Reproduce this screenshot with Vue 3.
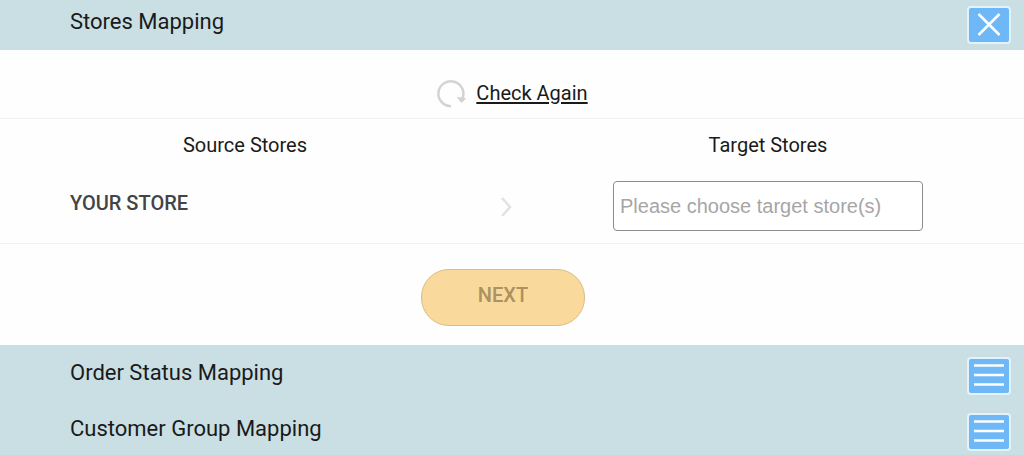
<template>
  <div class="mapping">
    <section>
      <div class="bar bar-open">
        <h2 class="bar-title">Stores Mapping</h2>
        <button class="toggle" type="button" aria-label="Close" @click="open = !open">
          <svg v-if="open" width="40" height="34" viewBox="0 0 40 34">
            <path d="M9.500 6L30.500 27M30.500 6L9.500 27" />
          </svg>
          <svg v-else width="40" height="34" viewBox="0 0 40 34">
            <path d="M5 6.500H35M5 16H35M5 25.500H35" />
          </svg>
        </button>
      </div>

      <div v-if="open">
        <div class="check">
          <svg class="reload" width="32" height="30" viewBox="0 0 32 30">
            <path d="M15 28.200A12.500 12.500 0 1 1 26.200 21" />
            <path class="reload-head" d="M21.500 19.500L29.500 20.500L25.500 24.500Z" />
          </svg>
          <a href="#" @click.prevent="check">Check Again</a>
        </div>

        <div class="stores">
          <div class="heading">Source Stores</div>
          <label class="heading heading-target" for="target">Target Stores</label>
          <div class="source">YOUR STORE</div>
          <svg class="arrow" width="12" height="20" viewBox="0 0 12 20">
            <path d="M2 2L10 11L2 20" />
          </svg>
          <input id="target" v-model="target" class="target" type="text" placeholder="Please choose target store(s)">
        </div>

        <div class="actions">
          <button class="next" type="button" :disabled="!target">NEXT</button>
        </div>
      </div>
    </section>

    <section v-for="item in sections" :key="item" class="bar">
      <h2 class="bar-title">{{ item }}</h2>
      <button class="toggle" type="button" :aria-label="item">
        <svg width="40" height="34" viewBox="0 0 40 34">
          <path d="M5 6.500H35M5 16H35M5 25.500H35" />
        </svg>
      </button>
    </section>
  </div>
</template>

<script setup>
import { ref } from 'vue'

const open = ref(true)
const target = ref('')
const sections = ['Order Status Mapping', 'Customer Group Mapping']

// start over with an empty choice
const check = () => {
  target.value = ''
}
</script>

<style>
body {
  margin: 0;
  background: #fefefe;
}
</style>

<style scoped>
.mapping {
  font-family: Roboto, "Liberation Sans", sans-serif;
  font-size: 20px;
  line-height: 24px;
  color: #1a1a1a;
}
.bar {
  display: flex;
  justify-content: space-between;
  align-items: flex-start;
  box-sizing: border-box;
  height: 56px;
  padding: 12px 13px 0 70px;
  background: #c9dfe4;
}
.bar-open {
  height: 50px;
  padding-top: 6px;
}
.bar-title {
  margin: 4px 0 0;
  font-size: 22px;
  font-weight: 400;
  line-height: 24px;
}
.toggle {
  display: flex;
  padding: 0;
  border: 2px solid #e4f2fb;
  border-radius: 4px;
  background: #6fb8f8;
  cursor: pointer;
}
svg {
  fill: none;
  stroke: #fff;
  stroke-width: 2.5;
}
.check {
  display: flex;
  justify-content: center;
  align-items: center;
  gap: 8px;
  height: 50px;
  padding-top: 18px;
  border-bottom: 1px solid #f2f2f2;
}
.check a {
  color: #1a1a1a;
  text-underline-offset: 2px;
}
.reload {
  stroke: #d3d3d3;
}
.reload-head {
  fill: #d3d3d3;
  stroke-width: 1;
}
.stores {
  display: grid;
  grid-template-columns: 350fr 172fr 331fr;
  align-items: center;
  row-gap: 24px;
  padding: 14px 101px 12px 70px;
  border-bottom: 1px solid #f2f2f2;
}
.heading {
  text-align: center;
}
.heading-target {
  grid-column: 3;
  margin-left: 21px;
}
.source {
  align-self: start;
  padding-top: 10px;
  font-weight: 500;
  color: #444;
}
.arrow {
  justify-self: center;
  stroke: #e2e2e2;
}
.target {
  box-sizing: border-box;
  height: 50px;
  min-width: 0;
  margin-left: 21px;
  padding: 0 6px;
  border: 1px solid #8c8c8c;
  border-radius: 4px;
  background: #fff;
  font: 20px "Liberation Sans", Arial, sans-serif;
}
.target::placeholder {
  color: #a6a6a6;
}
.actions {
  display: flex;
  justify-content: center;
  padding: 25px 18px 19px 0;
}
.next {
  width: 164px;
  height: 57px;
  padding: 0 0 6px;
  border: 1px solid #d9bd86;
  border-radius: 28px;
  background: #f9da9c;
  color: #ab925f;
  font: 500 20px Roboto, "Liberation Sans", sans-serif;
}
</style>
